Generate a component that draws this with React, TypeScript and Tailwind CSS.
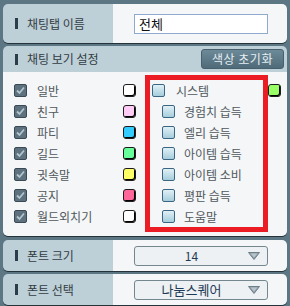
import React from "react";

const font = { fontFamily: '"Noto Sans CJK KR", "Noto Sans", sans-serif' };

function Checked() {
  return (
    <div className="w-[13px] h-[13px] rounded-[2px] bg-[#5d717e] border border-[#3a4a54] flex items-center justify-center shrink-0">
      <svg width="11" height="11" viewBox="0 0 11 11">
        <path d="M2 5.5 L4.5 8 L9 2.5" fill="none" stroke="#b3c5ce" strokeWidth="1.8" />
      </svg>
    </div>
  );
}

function Unchecked() {
  return (
    <div className="w-[13px] h-[13px] rounded-[2px] border border-[#3b6682] bg-gradient-to-b from-[#e0f0f6] to-[#a6cddc] shrink-0" />
  );
}

function Swatch({ color }: { color: string }) {
  return (
    <div
      className="w-[13px] h-[13px] rounded-[3px] border border-[#1c1c1c] shadow-[inset_-1px_-1px_0_#000] shrink-0"
      style={{ backgroundColor: color }}
    />
  );
}

function Bar() {
  return <div className="w-[3px] h-[11px] bg-[#2a3e4a]" />;
}

function Arrow() {
  return (
    <svg width="12" height="8" viewBox="0 0 12 8" className="shrink-0">
      <path d="M0.5 0.5 H11.5 L6 7.5 Z" fill="#8d9ca5" stroke="#6f7f88" strokeWidth="1" />
      <path d="M2.5 1.5 H9.5 L6 5.5 Z" fill="#b9c5cc" />
    </svg>
  );
}

const left: [string, string][] = [
  ["일반", "#ffffff"],
  ["친구", "#ffccf6"],
  ["파티", "#33ccff"],
  ["길드", "#66ff99"],
  ["귓속말", "#ffff66"],
  ["공지", "#ff6699"],
  ["월드외치기", "#ffffff"],
];

const right = ["경험치 습득", "엘리 습득", "아이템 습득", "아이템 소비", "평판 습득", "도움말"];

export default function App() {
  return (
    <div
      className="w-[290px] h-[306px] bg-[#5d7684] px-[3px] pt-[4px] flex flex-col text-[12px] text-[#333d44]"
      style={font}
    >
      {/* Panel 1 */}
      <div className="h-[39px] rounded-[5px] overflow-hidden flex shadow-[0_1px_0_#24323a]">
        <div className="w-[110px] bg-[#bdcfd7] flex items-center pl-[12px] gap-[9px]">
          <Bar />
          <span>채팅탭 이름</span>
        </div>
        <div className="flex-1 bg-[#f4f6f7] flex items-center pl-[21px]">
          <div className="w-[134px] h-[20px] border border-[#8fa9cf] bg-white flex items-center pl-[4px] text-[13px] text-[#111]">
            전체
          </div>
        </div>
      </div>

      {/* Panel 2 */}
      <div className="relative mt-[3px] h-[190px] rounded-[5px] overflow-hidden flex flex-col shadow-[0_1px_0_#24323a]">
        <div className="h-[26px] bg-[#bdcfd7] flex items-center justify-between pl-[12px] pr-[3px]">
          <div className="flex items-center gap-[9px]">
            <Bar />
            <span>채팅 보기 설정</span>
          </div>
          <div className="w-[83px] h-[20px] rounded-[3px] bg-gradient-to-b from-[#6d8a99] to-[#4f6b7a] border border-[#47606d] flex items-center justify-center text-[#e6eef2] tracking-[0.5px]">
            색상 초기화
          </div>
        </div>
        <div className="flex-1 bg-[#f4f6f7] pt-[8px] grid grid-cols-[142px_1fr] text-[#50585d]">
          <div className="flex flex-col">
            {left.map(([name, color]) => (
              <div key={name} className="h-[21px] flex items-center pl-[11px] pr-[9px]">
                <Checked />
                <span className="ml-[10px] flex-1">{name}</span>
                <Swatch color={color} />
              </div>
            ))}
          </div>
          <div className="flex flex-col">
            <div className="h-[21px] flex items-center pl-[7px] pr-[6px]">
              <Unchecked />
              <span className="ml-[11px] flex-1">시스템</span>
              <Swatch color="#99ff66" />
            </div>
            {right.map((name) => (
              <div key={name} className="h-[21px] flex items-center pl-[17px]">
                <Unchecked />
                <span className="ml-[9px]">{name}</span>
              </div>
            ))}
          </div>
        </div>
        <div className="absolute left-[142px] top-[29px] w-[123px] h-[157px] border-[5px] border-[#ec1c24]" />
      </div>

      {/* Panel 3 */}
      <div className="mt-[4px] h-[31px] rounded-[5px] overflow-hidden flex shadow-[0_1px_0_#24323a]">
        <div className="w-[110px] bg-[#bdcfd7] flex items-center pl-[12px] gap-[9px]">
          <Bar />
          <span>폰트 크기</span>
        </div>
        <div className="flex-1 bg-[#f4f6f7] flex items-center pl-[21px]">
          <div className="w-[134px] h-[20px] rounded-[3px] border border-[#74878f] bg-[#edf1f3] flex items-center pr-[7px] text-[#1f3a55]">
            <span className="flex-1 text-center">14</span>
            <Arrow />
          </div>
        </div>
      </div>

      {/* Panel 4 */}
      <div className="mt-[3px] h-[31px] rounded-[5px] overflow-hidden flex shadow-[0_1px_0_#24323a]">
        <div className="w-[110px] bg-[#bdcfd7] flex items-center pl-[12px] gap-[9px]">
          <Bar />
          <span>폰트 선택</span>
        </div>
        <div className="flex-1 bg-[#f4f6f7] flex items-center pl-[21px]">
          <div className="w-[134px] h-[20px] rounded-[3px] border border-[#74878f] bg-[#edf1f3] flex items-center pr-[7px] text-[#1f3a55] text-[13px]">
            <span className="flex-1 text-center">나눔스퀘어</span>
            <Arrow />
          </div>
        </div>
      </div>
    </div>
  );
}
